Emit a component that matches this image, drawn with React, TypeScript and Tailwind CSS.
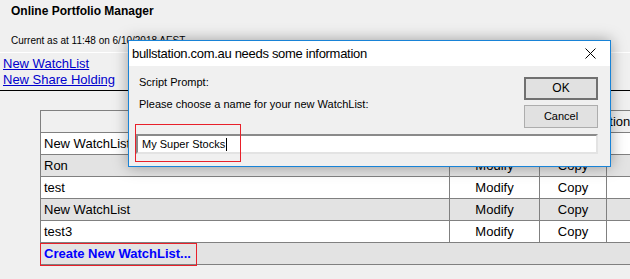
import React from "react";

const rows = [
  { name: "New WatchList", shade: false },
  { name: "Ron", shade: true },
  { name: "test", shade: false },
  { name: "New WatchList", shade: true },
  { name: "test3", shade: false },
];

const cell = "border-r border-b border-[#808080] h-[22px] flex items-center";

export default function App() {
  return (
    <div
      className="relative w-[630px] h-[279px] overflow-hidden bg-[#f0f0f0] text-black"
      style={{ fontFamily: '"Liberation Sans", Arial, sans-serif' }}
    >
      {/* Page header */}
      <div className="pl-[11px] pt-[4px]">
        <div className="text-[12px] font-bold leading-[15px]">Online Portfolio Manager</div>
        <div className="mt-[16px] text-[10px] leading-[12px]">Current as at 11:48 on 6/10/2018 AEST</div>
      </div>
      <div className="mt-[5px] h-px bg-white" />

      <div className="pl-[3px] pt-[3px] text-[13px] leading-[16px] text-[#0000cc]">
        <div><a href="#" className="underline">New WatchList</a></div>
        <div><a href="#" className="underline">New Share Holding</a></div>
      </div>
      <div className="mt-[2px] h-px bg-black" />

      {/* WatchList table */}
      <div className="ml-[40px] mt-[19px] w-[660px] border-t border-l border-[#808080] text-[13px]">
        <div className="grid grid-cols-[409px_90px_67px_94px]">
          <div className={`${cell} col-span-2`} />
          <div className={`${cell} col-span-2 pl-[52px]`}>Options</div>
        </div>
        {rows.map((r, i) => (
          <div
            key={i}
            className={`grid grid-cols-[409px_90px_67px_94px] ${r.shade ? "bg-[#e3e3e3]" : "bg-white"}`}
          >
            <div className={`${cell} pl-[3px]`}>{r.name}</div>
            <div className={`${cell} justify-center`}>Modify</div>
            <div className={`${cell} justify-center`}>Copy</div>
            <div className={cell} />
          </div>
        ))}
        <div className="relative bg-[#e3e3e3]">
          <div className={`${cell} pl-[3px]`}>
            <a href="#" className="font-bold text-[#0000ff]">Create New WatchList...</a>
          </div>
          <div className="absolute left-[-1px] top-0 w-[157px] h-[23px] border border-[#e8202a]" />
        </div>
      </div>

      {/* Script prompt dialog */}
      <div className="absolute left-[128px] top-[40px] w-[483px] h-[127px] border border-[#1883d7] bg-[#f0f0f0] shadow-[0_0_14px_rgba(0,0,0,0.35)]">
        <div className="h-[25px] bg-white flex items-center justify-between pl-[3px] pr-[14px] text-[13px] tracking-[-0.3px]">
          <span>bullstation.com.au needs some information</span>
          <svg width="11" height="11" viewBox="0 0 11 11" stroke="#000" strokeWidth="1">
            <line x1="0.5" y1="0.5" x2="10.5" y2="10.5" />
            <line x1="10.5" y1="0.5" x2="0.5" y2="10.5" />
          </svg>
        </div>
        <div className="flex h-[68px] text-[11px] leading-[15px]">
          <div className="flex-1 pl-[10px] pt-[9px]">
            <div>Script Prompt:</div>
            <div className="mt-[7px]">Please choose a name for your new WatchList:</div>
          </div>
          <div className="mr-[12px] mt-[11px] flex w-[74px] flex-col gap-[5px]">
            <button className="h-[23px] border-2 border-[#707070] bg-[#e1e1e1] text-[12px]">OK</button>
            <button className="h-[23px] border border-[#adadad] bg-[#e1e1e1] text-[11px]">Cancel</button>
          </div>
        </div>
        <div className="relative ml-[7px] mr-[12px] h-[20px] border-2 border-t-[#8a8a8a] border-l-[#8a8a8a] border-r-[#e3e3e3] border-b-[#e3e3e3] bg-white flex items-center pl-[4px] text-[11px]">
          <span>My Super Stocks</span>
          <span className="ml-[1px] inline-block w-px h-[13px] bg-black" />
          <div className="absolute left-[-3px] top-[-12px] w-[106px] h-[38px] border border-[#e8202a]" />
        </div>
      </div>
    </div>
  );
}
